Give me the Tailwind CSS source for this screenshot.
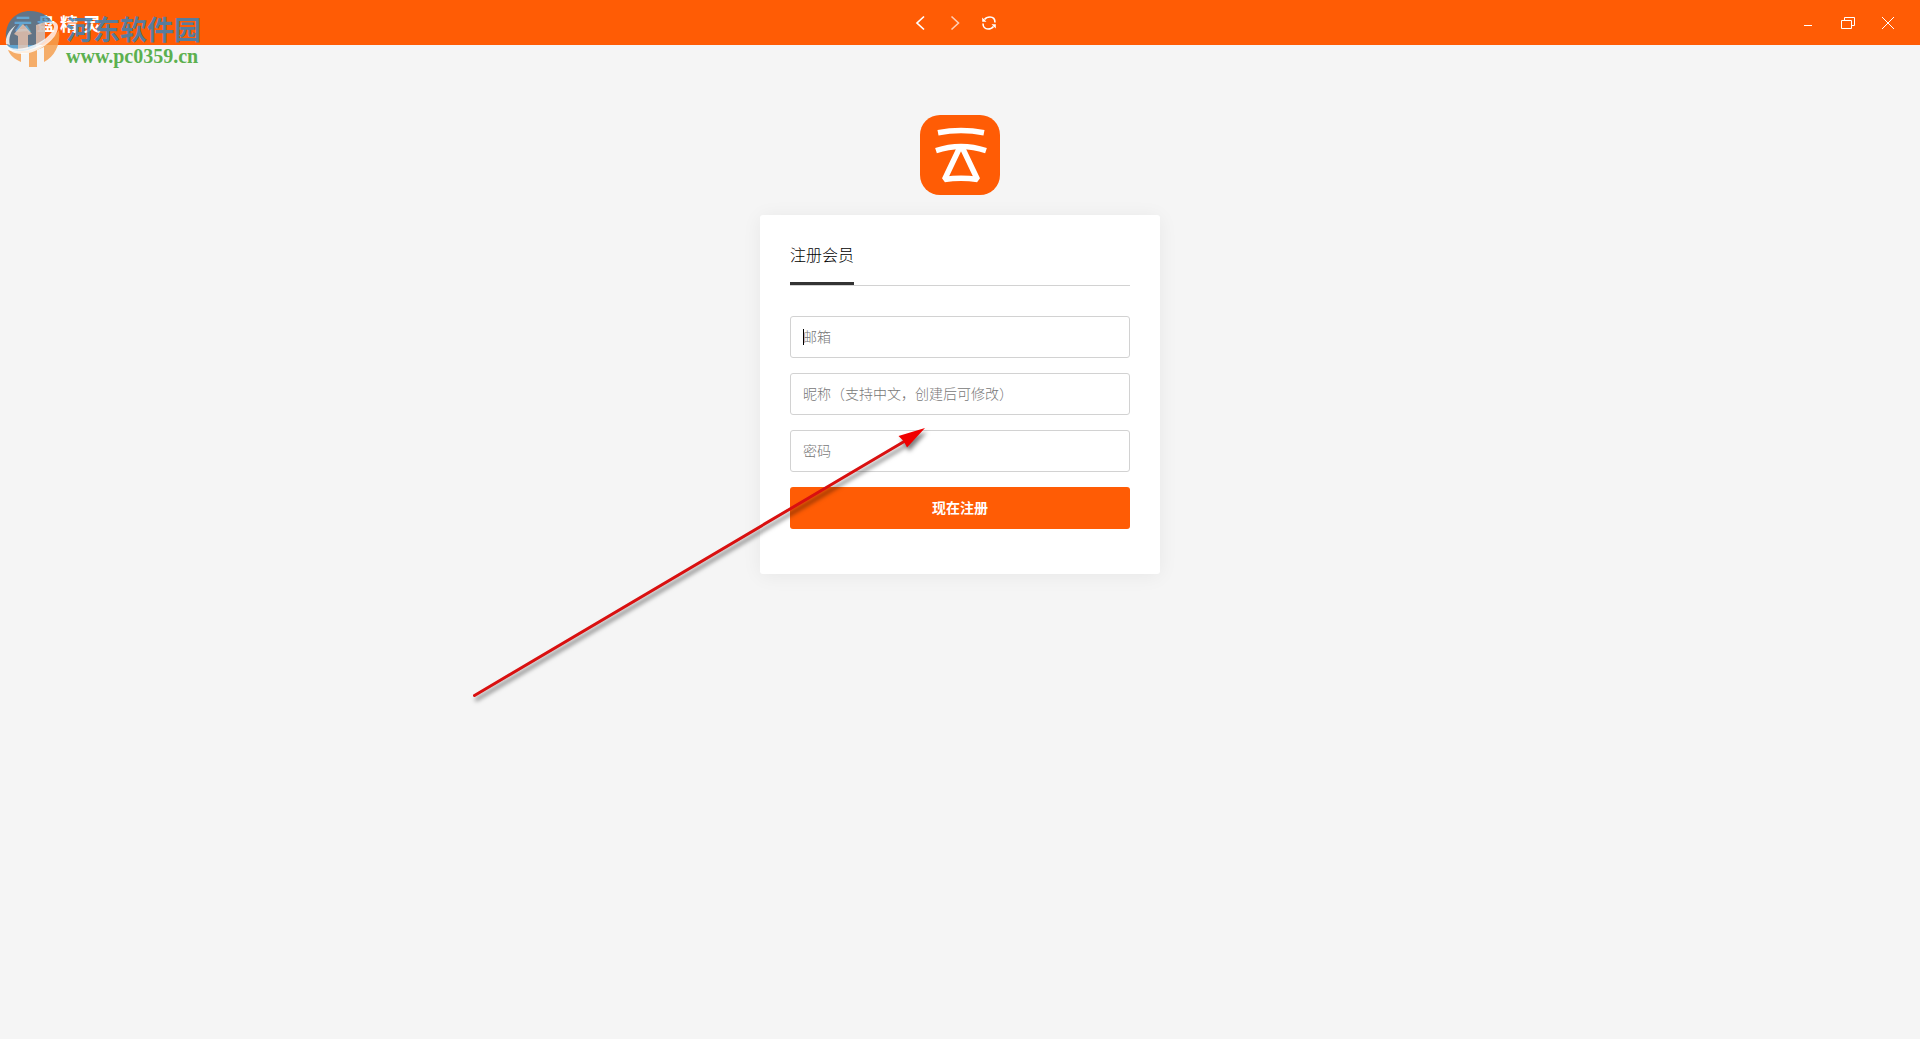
<!DOCTYPE html>
<html lang="zh-CN">
<head>
  <meta charset="UTF-8" />
  <title>云盘精灵</title>
  <meta name="viewport" content="width=device-width, initial-scale=1" />
  <script src="https://cdn.jsdelivr.net/npm/@tailwindcss/browser@4"></script>
</head>
<body class="min-h-screen bg-[#f5f5f5] text-[#333] font-['Noto_Sans_CJK_SC',sans-serif] overflow-x-hidden">

  <!-- Title bar -->
  <header class="grid grid-cols-3 items-center h-[45px] pl-3.5 pr-6 bg-[#ff5c05] text-white">
    <h1 class="flex gap-[5px] text-lg leading-5 font-bold"><span>云</span><span>盘</span><span>精</span><span>灵</span></h1>

    <nav class="flex justify-center gap-[18px]">
      <button type="button" aria-label="后退" class="size-4">
        <svg viewBox="0 0 16 16" class="size-4" fill="none" stroke="currentColor" stroke-width="1.7"><path d="M11 1.500 4 8l7 6.500"/></svg>
      </button>
      <button type="button" aria-label="前进" class="size-4 opacity-70">
        <svg viewBox="0 0 16 16" class="size-4" fill="none" stroke="currentColor" stroke-width="1.6"><path d="M4.500 1.500 11.500 8l-7 6.500"/></svg>
      </button>
      <button type="button" aria-label="刷新" class="size-4">
        <svg viewBox="0 0 16 16" class="size-4" fill="none" stroke="currentColor" stroke-width="1.6"><path d="M3.500 4.500C5 2.500 7 2 9 2c3 0 5 2 5 5.500M12.500 11.500C11 13.500 9 14 7 14c-3 0-5-2-5-5.500"/><path d="M1.200 2.500v4.300h4.300zM14.800 13.500V9.200h-4.300z" fill="currentColor" stroke="none"/></svg>
      </button>
    </nav>

    <div class="flex justify-end gap-6">
      <button type="button" aria-label="最小化" class="size-4">
        <svg viewBox="0 0 16 16" class="size-4" fill="none" stroke="currentColor"><path d="M4 10.500h8"/></svg>
      </button>
      <button type="button" aria-label="还原" class="size-4">
        <svg viewBox="0 0 16 16" class="size-4" fill="none" stroke="currentColor"><path d="M1.500 5.500h10v8h-10zM4.500 5.500v-3h10v8h-3"/></svg>
      </button>
      <button type="button" aria-label="关闭" class="size-4">
        <svg viewBox="0 0 16 16" class="size-4" fill="none" stroke="currentColor"><path d="m2 2 12 12M14 2 2 14"/></svg>
      </button>
    </div>
  </header>

  <!-- Register form -->
  <main class="flex flex-col items-center pt-[70px]">
    <svg viewBox="0 0 80 80" class="size-20" fill="none" role="img" aria-label="云盘精灵">
      <rect width="80" height="80" rx="20" fill="#ff5c05"/>
      <path d="M18 17.700Q41 13.300 64 17.700" stroke="#fff" stroke-width="5.500"/>
      <path d="M16 35.700Q41 27.500 66 35.700" stroke="#fff" stroke-width="5.500"/>
      <path d="M39.500 33 24.500 64.500Q41 62 57.500 64.500L42.500 33" stroke="#fff" stroke-width="5.500" stroke-linejoin="bevel"/>
    </svg>

    <section class="w-full max-w-[400px] mt-5 px-[30px] pt-5 pb-[45px] bg-white rounded-[3px] shadow-[0_2px_20px_rgba(0,0,0,0.06)]">
      <div class="flex h-[51px] mb-[30px] border-b border-[#d2d2d2]">
        <h2 class="h-[50px] text-base leading-[38px] font-light text-black border-b-3 border-[#333]">注册会员</h2>
      </div>
      <form class="flex flex-col gap-[15px] text-sm">
        <div class="relative">
          <input type="email" aria-label="邮箱" placeholder="邮箱" class="block w-full h-[42px] px-3 pb-0.5 border border-[#d2d2d2] rounded-[3px] outline-none font-light placeholder:text-[#777]" />
          <span class="absolute left-[13px] top-[13px] w-px h-4 bg-black"></span>
        </div>
        <input type="text" aria-label="昵称" placeholder="昵称（支持中文，创建后可修改）" class="block w-full h-[42px] px-3 pb-0.5 border border-[#d2d2d2] rounded-[3px] outline-none font-light placeholder:text-[#777]" />
        <input type="password" aria-label="密码" placeholder="密码" class="block w-full h-[42px] px-3 pb-0.5 border border-[#d2d2d2] rounded-[3px] outline-none font-light placeholder:text-[#777]" />
        <button type="submit" class="h-[42px] pb-0.5 rounded-[3px] bg-[#ff5c05] text-white font-bold">现在注册</button>
      </form>
    </section>
  </main>

  <!-- Site watermark -->
  <div class="absolute left-1 top-2 flex gap-0.5 pointer-events-none">
    <svg viewBox="0 0 60 60" class="size-[60px]">
      <path d="M3 37C-2 17 10 3 26 3c11 0 19 5 24 13l-9-2v19c-6 5-14 9-22 10-7 1-13-1-16-6z" fill="#1f7fbd" fill-opacity=".7"/>
      <path d="M10 26l9-10 9 10-4 1v14l-10 1V28zM32 17l9-3v18l-9 7z" fill="#ffd0b4" fill-opacity=".7"/>
      <path d="M55 22c2 15-5 27-15 32V39l-7 3v17h-8V45h-8v9C10 51 6 47 4 42c18 5 40-3 51-20z" fill="#f5a050" fill-opacity=".85"/>
      <path d="M2 36c3 5 12 6 22 3 14-4 25-13 26-20 0-4-4-5-9-4 8-3 13-1 13 4 0 10-14 22-29 26C13 48 4 44 2 36zM2 36c-1-7 3-14 10-19-5 6-8 13-6 20z" fill="#fff" fill-opacity=".8"/>
    </svg>
    <div class="flex flex-col pt-1">
      <span class="text-[27px] leading-[34px] font-bold text-[#3a82b8]/85">河东软件园</span>
      <span class="text-xl leading-5 font-bold text-[#5cb04f] font-['Liberation_Serif',serif]">www.pc0359.cn</span>
    </div>
  </div>

  <!-- Pointer arrow -->
  <svg viewBox="0 0 460 280" class="absolute left-[470px] top-[424px] w-[460px] h-[280px] pointer-events-none drop-shadow-[2px_4px_2px_rgba(0,0,0,0.5)]" fill="#f00000">
    <path d="M4.500 271.500 435 17" stroke="#d91010" stroke-width="3" stroke-linecap="round"/>
    <path d="M455 4 428.500 12 433.500 17 436 21.500 437 23.500z"/>
  </svg>
</body>
</html>
